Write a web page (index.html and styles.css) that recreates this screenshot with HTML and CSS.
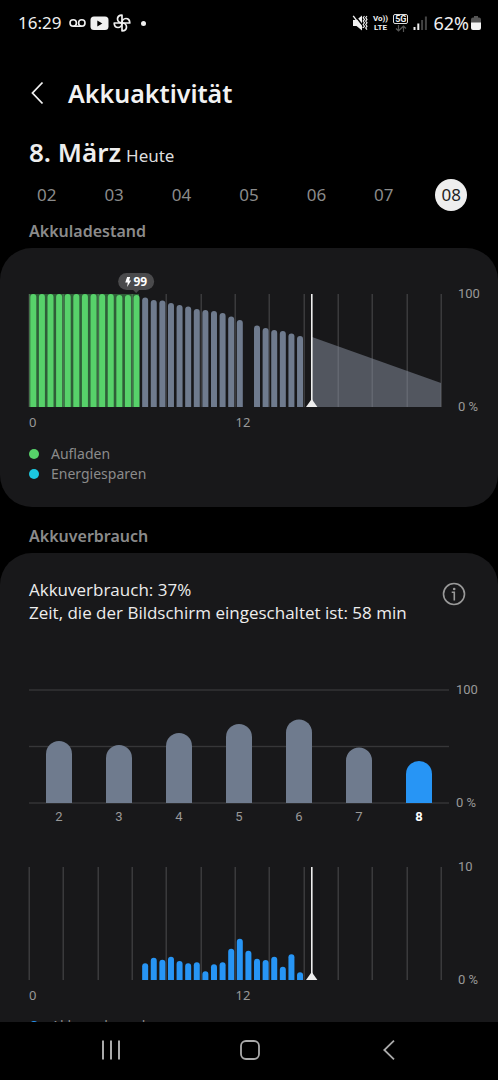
FILE: index.html
```html
<!DOCTYPE html>
<html lang="de">
<head>
<meta charset="utf-8">
<meta name="viewport" content="width=device-width, initial-scale=1">
<title>Akkuaktivität</title>
<link rel="stylesheet" href="styles.css">
</head>
<body>
<div class="screen">
  <div class="status">
    <div class="status-group">
      <span class="clock">16:29</span>
      <svg class="icon" width="17" height="20" viewBox="0 0 17 20" fill="none" stroke="currentColor" stroke-width="1.6"><circle cx="4.2" cy="10" r="3.2"/><circle cx="12.8" cy="10" r="3.2"/><path d="M4.2 13.2h8.6"/></svg>
      <svg class="icon" width="19" height="20" viewBox="0 0 19 20"><rect x="0.5" y="3.5" width="18" height="13.5" rx="3.5" fill="currentColor"/><path d="M7.3 7.5v6l5-3z" fill="#000"/></svg>
      <svg class="icon" width="18" height="20" viewBox="0 0 18 20" fill="none" stroke="currentColor" stroke-width="1.7" stroke-linejoin="round"><path d="M9 10V2.200c-3 0-4.500 1.800-4.500 3.900S6.500 10 9 10z"/><path d="M9 10h7.800c0-3-1.800-4.500-3.900-4.500S9 7.500 9 10z"/><path d="M9 10v7.800c3 0 4.500-1.800 4.500-3.900S11.500 10 9 10z"/><path d="M9 10H1.200c0 3 1.800 4.500 3.900 4.500S9 12.500 9 10z"/></svg>
      <span class="more-dot"></span>
    </div>
    <div class="status-group status-right">
      <svg class="icon" width="16" height="18" viewBox="0 0 16 18" fill="none" stroke="currentColor"><path d="M1 6h3.500L10 1.500v15L4.500 12H1z" fill="currentColor" stroke="none"/><path d="M2.500 1l11 14" stroke="#000" stroke-width="1.400"/><path d="M1.200 1.800l9 12" stroke-width="1.400"/><path d="M12.500 2l-1.300 1.700 1.300 1.700-1.300 1.700 1.300 1.700-1.300 1.700 1.300 1.700-1.300 1.700M15 2l-1.300 1.700L15 5.400l-1.300 1.700L15 8.800l-1.300 1.700 1.300 1.700-1.300 1.700 1.300 1.700" stroke-width="1.100"/></svg>
      <span class="volte"><span>Vo))</span><span>LTE</span></span>
      <span class="net"><span class="net-tag">5G</span>
        <svg width="12" height="7" viewBox="0 0 12 7" fill="none" stroke="#555" stroke-width="1.200"><path d="M3.500 0v6M1 3.500L3.500 6 6 3.500M8.500 7V1M6 3.500L8.500 1 11 3.500"/></svg></span>
      <svg class="icon" width="14" height="16" viewBox="0 0 14 16"><path d="M0.500 12h2v3h-2zM4.300 8.500h2V15h-2z" fill="#eee"/><path d="M8.100 5h2v10h-2zM11.900 1.500h2V15h-2z" fill="#444"/></svg>
      <span class="percent">62%</span>
      <svg class="battery" width="10" height="16" viewBox="0 0 10 16"><path d="M3 1h4v1.500h1a2 2 0 0 1 2 2V8H0V4.500a2 2 0 0 1 2-2h1z" fill="#555"/><path d="M0 7.500h10V13a2 2 0 0 1-2 2H2a2 2 0 0 1-2-2z" fill="#f4f4f4"/></svg>
    </div>
  </div>

  <main class="content">
    <header class="header">
      <button class="back" type="button" aria-label="Zurück"><svg width="13" height="24" viewBox="0 0 13 24" fill="none" stroke="currentColor" stroke-width="1.800"><path d="M11.500 1.500L1.500 12l10 10.500"/></svg></button>
      <h1 class="title">Akkuaktivität</h1>
    </header>
    <div class="date"><h2 class="date-day">8. März</h2><span class="date-note">Heute</span></div>
    <nav class="days" aria-label="Tag">
      <button class="day" type="button">02</button>
      <button class="day" type="button">03</button>
      <button class="day" type="button">04</button>
      <button class="day" type="button">05</button>
      <button class="day" type="button">06</button>
      <button class="day" type="button">07</button>
      <button class="day day-active" type="button" aria-current="date">08</button>
    </nav>

    <h3 class="section">Akkuladestand</h3>
    <section class="card card-level">
      <div class="chart">
        <div class="plot">
          <svg id="level" class="plot-svg" viewBox="0 0 413 113"></svg>
          <span class="pill"><svg width="6" height="10" viewBox="0 0 6 10"><path d="M2 0h3L4 3.500h2L2 10l.6-4.500H0z" fill="#fff"/></svg>99</span>
        </div>
        <div class="scale"><span>100</span><span>0 %</span></div>
      </div>
      <div class="hours"><span>0</span><span>12</span></div>
      <ul class="legend">
        <li><span class="dot dot-green"></span>Aufladen</li>
        <li><span class="dot dot-cyan"></span>Energiesparen</li>
      </ul>
    </section>

    <h3 class="section section-usage">Akkuverbrauch</h3>
    <section class="card card-usage">
      <div class="summary">
        <p class="summary-text">Akkuverbrauch: 37%<br>Zeit, die der Bildschirm eingeschaltet ist: 58 min</p>
        <button class="info" type="button" aria-label="Info"><svg width="24" height="24" viewBox="0 0 24 24" fill="none" stroke="currentColor" stroke-width="1.600"><circle cx="12" cy="12" r="10.500"/><path d="M9.700 10.300h2.600V18.500"/><circle cx="12.200" cy="7" r="1.300" fill="currentColor" stroke="none"/></svg></button>
      </div>
      <div class="chart chart-daily">
        <svg id="daily" class="plot-svg" viewBox="0 0 420 113"></svg>
        <div class="scale"><span>100</span><span>0 %</span></div>
      </div>
      <div class="weekdays"><span>2</span><span>3</span><span>4</span><span>5</span><span>6</span><span>7</span><strong>8</strong></div>
      <div class="chart chart-hourly">
        <svg id="hourly" class="plot-svg" viewBox="0 0 413 113"></svg>
        <div class="scale"><span>10</span><span>0 %</span></div>
      </div>
      <div class="hours"><span>0</span><span>12</span></div>
      <ul class="legend">
        <li><span class="dot dot-blue"></span>Akkuverbrauch</li>
      </ul>
    </section>
  </main>

  <nav class="navbar" aria-label="System">
    <button type="button" aria-label="Letzte Apps"><svg width="20" height="20" viewBox="0 0 20 20" stroke="currentColor" stroke-width="2"><path d="M2 0.500v19M10 0.500v19M18 0.500v19"/></svg></button>
    <button type="button" aria-label="Startseite"><svg width="20" height="20" viewBox="0 0 20 20" fill="none" stroke="currentColor" stroke-width="1.800"><rect x="1" y="1" width="18" height="18" rx="5"/></svg></button>
    <button type="button" aria-label="Zurück"><svg width="12" height="20" viewBox="0 0 12 20" fill="none" stroke="currentColor" stroke-width="1.800"><path d="M11 0.700L1.300 10 11 19.300"/></svg></button>
  </nav>
</div>
<script src="charts.js"></script>
</body>
</html>
```
FILE: styles.css
```css
* { box-sizing: border-box; }
body { margin: 0; background: #000; color: #f2f2f2; font-family: "Noto Sans", "Open Sans", sans-serif; }
h1, h2, h3, p, ul { margin: 0; padding: 0; }
button { padding: 0; border: 0; background: none; color: inherit; font: inherit; }
svg { display: block; }

.screen { display: flex; flex-direction: column; height: 100vh; }

.status { display: flex; justify-content: space-between; align-items: center; height: 46px; flex: none; padding: 0 17px 0 18px; color: #f0f0f0; }
.status-group { display: flex; align-items: center; gap: 4px; }
.status-right { gap: 5px; }
.clock { font-size: 17px; line-height: 24px; margin-right: 4px; }
.more-dot { width: 5px; height: 5px; border-radius: 50%; background: #f0f0f0; margin-left: 6px; }
.volte { display: flex; flex-direction: column; align-items: center; font: 700 8px/9px Roboto, sans-serif; }
.net { display: flex; flex-direction: column; align-items: center; gap: 1px; }
.net-tag { border: 1px solid #ddd; border-radius: 2px; padding: 0 1px; font: 700 9px/8px Roboto, sans-serif; }
.percent { font-size: 18px; line-height: 24px; margin-left: 1px; }
.battery { margin-left: -3px; }

.content { flex: 1; min-height: 0; overflow: hidden; }
.header { display: flex; align-items: center; gap: 24px; padding: 30px 31px 0; }
.title { font-size: 25px; line-height: 34px; font-weight: 600; }
.date { display: flex; align-items: baseline; gap: 5px; padding: 24px 29px 0; }
.date-day { font-size: 26px; line-height: 36px; font-weight: 600; color: #ededed; }
.date-note { font-size: 17px; color: #ddd; }
.days { display: grid; grid-template-columns: repeat(7, 1fr); justify-items: center; padding: 9px 13px 0; }
.day { width: 32px; height: 32px; border-radius: 50%; font-size: 17px; line-height: 32px; color: #8b8b8b; }
.day-active { background: #eee; color: #222; }
.section { padding: 8px 29px 5px; font-size: 16px; line-height: 24px; font-weight: 600; color: #8b8b8b; }
.section-usage { padding-top: 17px; }

.card { background: #18181a; border-radius: 32px; padding-left: 29px; }
.card-level { padding-top: 46px; padding-bottom: 23px; }
.card-usage { padding-top: 25px; padding-bottom: 24px; }
.chart { display: grid; grid-template-columns: 1fr 56px; }
.plot { position: relative; }
.plot-svg { width: 100%; overflow: visible; }
.scale { display: flex; flex-direction: column; justify-content: space-between; margin: -9px 0; padding-left: 16px; font: 13px/18px Roboto, sans-serif; color: #999; }
.chart-daily { grid-template-columns: 1fr 49px; margin-top: 66px; }
.chart-daily .scale { padding-left: 7px; }
.chart-hourly { margin-top: 41px; }
.hours { display: grid; grid-template-columns: 1fr 1fr; margin-right: 56px; padding-top: 6px; font-size: 13px; line-height: 18px; color: #999; }
.weekdays { display: grid; grid-template-columns: repeat(7, 1fr); margin-right: 49px; padding-top: 5px; text-align: center; font: 13px/18px Roboto, sans-serif; color: #999; }
.weekdays strong { color: #fff; }
.pill { position: absolute; left: 26%; bottom: 100%; display: flex; align-items: center; gap: 2px; height: 17px; margin-bottom: 4px; padding: 0 7px; border-radius: 9px; background: #4a4a4c; color: #fff; font-size: 12px; line-height: 17px; font-weight: 700; transform: translateX(-50%); }
.pill::after { content: ""; position: absolute; top: 100%; left: 50%; margin-left: -3px; border: 3px solid transparent; border-top-color: #4a4a4c; border-bottom: 0; }
.legend { list-style: none; padding-top: 13px; font-size: 14px; line-height: 20px; color: #8b8b8b; }
.card-usage .legend { padding-top: 12px; }
.legend li { display: flex; align-items: center; gap: 12px; }
.dot { width: 10px; height: 10px; border-radius: 50%; }
.dot-green { background: #57d26a; }
.dot-cyan { background: #1cc8e0; }
.dot-blue { background: #2795f5; }

.summary { display: flex; justify-content: space-between; align-items: flex-start; padding-right: 32px; }
.summary-text { font-family: "Open Sans", "Noto Sans", sans-serif; font-size: 17px; line-height: 23px; color: #ededed; }
.info { color: #999; margin-top: 4px; flex: none; }

.navbar { display: grid; grid-template-columns: repeat(3, 1fr); justify-items: center; align-items: center; flex: none; height: 58px; padding: 0 39px 2px 41px; background: #000; color: #aaa; }
```
FILE: charts.js
```js
const SLOT = 413 / 48;
const BASE = 113;
const SLATE = '#6f7b8e';
const BLUE = '#2795f5';

function bar(center, width, height, color) {
  const r = width / 2;
  const left = center - r;
  const top = BASE - height;
  return `<path fill="${color}" d="M${left} ${BASE}V${top + r}a${r} ${r} 0 0 1 ${width} 0V${BASE}z"/>`;
}

function hourBar(slot, height, color) {
  return bar((slot + 0.5) * SLOT, 6, height, color);
}

function hourGrid() {
  let out = '';
  for (let i = 0; i <= 12; i++) {
    out += `<rect x="${Math.round(i * 412 / 12) - 0.5}" y="0" width="1.5" height="${BASE}" fill="#fff" opacity="0.15"/>`;
  }
  return out;
}

function nowMarker() {
  return `<rect x="282" y="0" width="1.6" height="${BASE}" fill="#eee"/><path d="M277 ${BASE}l5.700-8 5.700 8z" fill="#eee"/>`;
}

const charging = [113, 113, 113, 113, 113, 113, 113, 113, 113, 113, 112, 112, 112];
const draining = [109.5, 107, 106.5, 104, 102, 100.5, 98, 97, 96, 94, 90.5, 87, 0, 81.5, 79, 77, 76, 73.5, 71];
const hourly = [16.7, 22.3, 20.3, 23.3, 19, 16.7, 17.7, 8.7, 15.7, 17.7, 31.3, 41.3, 29.3, 21.3, 20, 23.3, 13.3, 25.7, 7.7];
const daily = [62, 58, 70, 79, 83.5, 55.5, 42];

let level = hourGrid();
level += `<rect x="0" y="0" width="110" height="${BASE}" fill="#57d26a" opacity="0.38"/>`;
charging.forEach((h, i) => { level += hourBar(i, h, '#57d26a'); });
draining.forEach((h, i) => { if (h) level += hourBar(i + 13, h, SLATE); });
level += `<path d="M283 43L412 89V${BASE}H283z" fill="#8b94a4" opacity="0.5"/>`;
document.getElementById('level').innerHTML = level + nowMarker();

let days = '';
[0, 56.5, BASE].forEach((y) => { days += `<rect x="0" y="${y - 0.7}" width="420" height="1.4" fill="#363638"/>`; });
daily.forEach((h, i) => { days += bar(30 + i * 60, 26, h, i === 6 ? BLUE : SLATE); });
document.getElementById('daily').innerHTML = days;

let hours = hourGrid();
hourly.forEach((h, i) => { hours += hourBar(i + 13, h, BLUE); });
document.getElementById('hourly').innerHTML = hours + nowMarker();
```
